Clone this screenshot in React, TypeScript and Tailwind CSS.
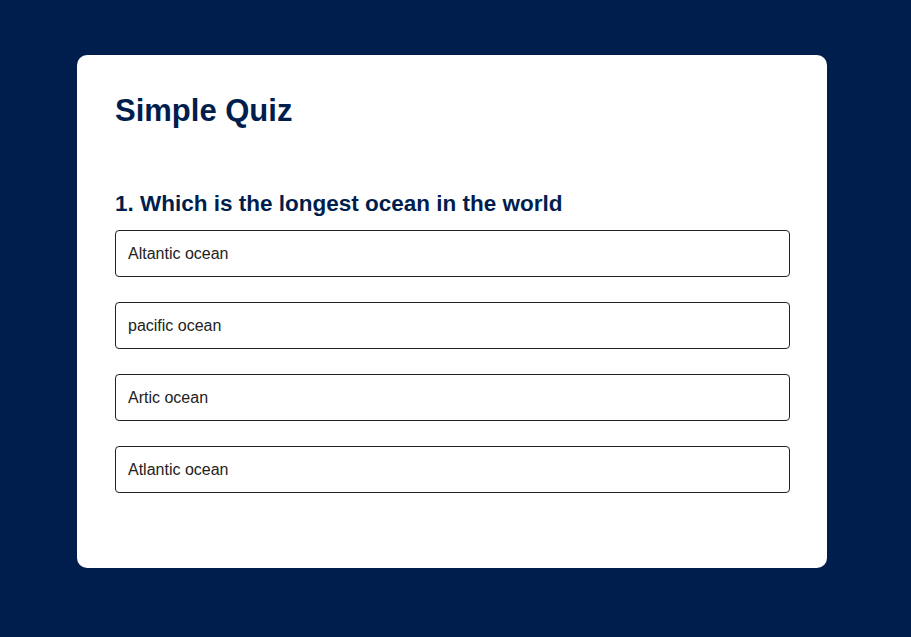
import { useState } from 'react';

const question = {
    text: "1. Which is the longest ocean in the world",
    answers: ["Altantic ocean", "pacific ocean", "Artic ocean", "Atlantic ocean"],
};

export default function App() {
    const [selected, setSelected] = useState<number | null>(null);

    return (
        <div className="min-h-screen w-full bg-[#001e4d] pt-[55px] font-['Liberation_Sans',Arial,sans-serif]">
            <div className="ml-[77px] w-[750px] rounded-[10px] bg-white pl-[38px] pr-[37px] pt-[40px] pb-[75px]">
                <h1 className="text-[31px] leading-none font-bold text-[#001e4d]">Simple Quiz</h1>
                <div className="mt-[67px]">
                    <h2 className="text-[22.5px] leading-[22px] font-bold text-[#001e4d]">{question.text}</h2>
                    <div className="mt-[15px] flex flex-col gap-[25px]">
                        {question.answers.map((answer, index) => (
                            <button
                                key={index}
                                onClick={() => setSelected(index)}
                                className={`h-[47px] w-full rounded-[4px] border border-[#222] px-[12px] text-left text-[16px] text-[#222] ${selected === index ? 'bg-[#dddddd]' : 'bg-white'}`}
                            >
                                {answer}
                            </button>
                        ))}
                    </div>
                </div>
            </div>
        </div>
    );
}
